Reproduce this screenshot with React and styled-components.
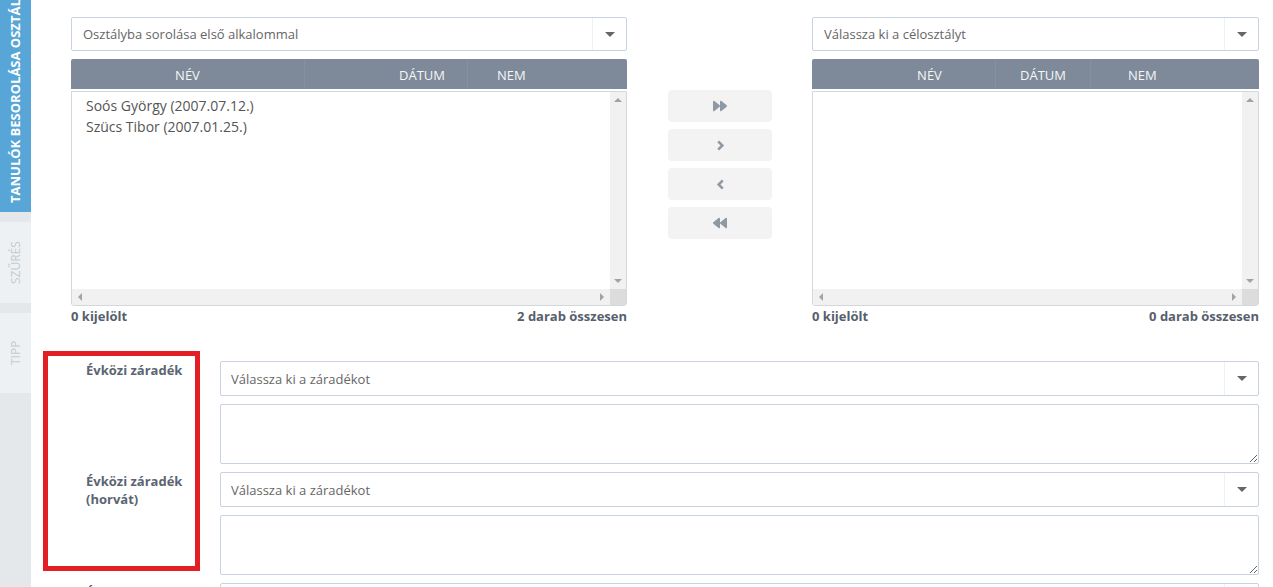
import styled, { createGlobalStyle } from "styled-components";
import { FaForward, FaBackward } from "react-icons/fa";

const Global = createGlobalStyle`
    * { box-sizing: border-box; }
    body {
        margin: 0;
        font-family: "Open Sans", "Liberation Sans", sans-serif;
        background: #fff;
        color: #555;
    }
`

const Page = styled.div`
    display: flex;
    height: 100vh;
    overflow: hidden;
`
const Sidebar = styled.aside`
    width: 31px;
    flex-shrink: 0;
    background: #e5e8eb;
    display: flex;
    flex-direction: column;
    gap: 10px;
`
const Tab = styled.div`
    height: ${p => p.$h}px;
    background: ${p => p.$active ? "#58a5d7" : "#eef1f3"};
    display: flex;
    justify-content: center;
    padding-bottom: ${p => p.$active ? 9 : 0}px;
`
const TabLabel = styled.span`
    writing-mode: vertical-rl;
    transform: rotate(180deg);
    white-space: nowrap;
    overflow: hidden;
    height: 100%;
    text-align: ${p => p.$active ? "start" : "center"};
    font-size: ${p => p.$active ? 13 : 12}px;
    font-weight: ${p => p.$active ? 700 : 400};
    color: ${p => p.$active ? "#fff" : "#c4cad0"};
    line-height: 31px;
`
const Content = styled.main`
    flex: 1;
    padding: 17px 14px 0 40px;
`
const TopRow = styled.div`
    display: flex;
    align-items: flex-start;
`
const Panel = styled.section`
    width: ${p => p.$w}px;
    flex-shrink: 0;
`
const Select = styled.div`
    height: ${p => p.$h || 34}px;
    border: 1px solid #c9d3df;
    border-radius: 2px;
    display: flex;
    align-items: center;
    background: #fff;
`
const SelectText = styled.span`
    flex: 1;
    padding-left: ${p => p.$pad || 11}px;
    font-size: 13px;
    color: #666;
`
const Caret = styled.span`
    width: 34px;
    align-self: stretch;
    border-left: 1px solid #eef0f2;
    display: flex;
    align-items: center;
    justify-content: center;

    &::after {
        content: "";
        border-left: 5px solid transparent;
        border-right: 5px solid transparent;
        border-top: 5px solid #666;
    }
`
const Header = styled.div`
    margin-top: 8px;
    height: 30px;
    background: #7e8a99;
    border-radius: 2px 2px 0 0;
    display: grid;
    grid-template-columns: ${p => p.$cols};
    align-items: center;
    color: #f4f6f8;
    font-size: 13px;
`
const HeadCell = styled.div`
    height: 100%;
    display: flex;
    align-items: center;
    justify-content: ${p => p.$align || "center"};
    padding: 1px ${p => p.$pr || 0}px 0 ${p => p.$pl || 0}px;
    border-right: ${p => p.$sep ? "1px solid #85919f" : "none"};
`
const ListBox = styled.div`
    margin-top: 2px;
    height: 215px;
    border: 1px solid #d3d8dd;
    border-radius: 0 0 3px 3px;
    display: grid;
    grid-template-columns: 1fr 16px;
    grid-template-rows: 1fr 16px;
    overflow: hidden;
`
const Items = styled.div`
    padding: 3px 14px;
    font-size: 14px;
    line-height: 21px;
    color: #555;
`
const VBar = styled.div`
    background: #f1f1f1;
    display: flex;
    flex-direction: column;
    justify-content: space-between;
    align-items: center;
    padding: 6px 0;
`
const HBar = styled.div`
    background: #f1f1f1;
    display: flex;
    justify-content: space-between;
    align-items: center;
    padding: 0 6px;
`
const Corner = styled.div`
    background: #dcdcdc;
`
const Arrow = styled.span`
    width: 0;
    height: 0;
    border: 4px solid transparent;
    ${p => p.$dir === "up" && "border-bottom-color: #a3a3a3; border-top-width: 0;"}
    ${p => p.$dir === "down" && "border-top-color: #a3a3a3; border-bottom-width: 0;"}
    ${p => p.$dir === "left" && "border-right-color: #a3a3a3; border-left-width: 0;"}
    ${p => p.$dir === "right" && "border-left-color: #a3a3a3; border-right-width: 0;"}
`
const Footer = styled.div`
    margin-top: 1px;
    display: flex;
    justify-content: space-between;
    font-size: 13px;
    font-weight: 700;
    line-height: 18px;
    color: #56606d;
`
const Mover = styled.div`
    width: 104px;
    flex-shrink: 0;
    margin: 73px 40px 0 41px;
    display: flex;
    flex-direction: column;
    gap: 7px;
`
const MoveButton = styled.button`
    height: 32px;
    border: none;
    border-radius: 4px;
    background: #f3f3f3;
    color: #8f99a4;
    display: flex;
    align-items: center;
    justify-content: center;
    padding: 0;

    svg {
        width: ${p => p.$size || 11}px;
        height: ${p => p.$size || 11}px;
    }
`
const Form = styled.div`
    position: relative;
    margin-top: 36px;
    display: grid;
    grid-template-columns: 149px 1fr;
    row-gap: 8px;
`
const Label = styled.div`
    padding-left: 15px;
    font-size: 13px;
    font-weight: 700;
    line-height: 18px;
    color: #5b6572;
`
const Field = styled.div`
    display: flex;
    flex-direction: column;
    gap: 8px;
`
const TextArea = styled.textarea`
    height: 60px;
    width: 100%;
    border: 1px solid #c9d3df;
    border-radius: 2px;
    resize: vertical;
    font-family: inherit;
    display: block;
`
const Highlight = styled.div`
    position: absolute;
    left: -28px;
    top: -10px;
    width: 157px;
    height: 220px;
    border: 5px solid #e31e24;
    pointer-events: none;
`

const Chevron = ({ left }) => (
    <svg viewBox="0 0 10 12" fill="none">
        <polyline
            points={left ? "7.5,1.5 3,6 7.5,10.5" : "2.5,1.5 7,6 2.5,10.5"}
            stroke="currentColor"
            strokeWidth="2.8"
        />
    </svg>
)

const Table = ({ width, placeholder, cols, heads, items, selected, total }) => (
    <Panel $w={width}>
        <Select>
            <SelectText>{placeholder}</SelectText>
            <Caret />
        </Select>
        <Header $cols={cols}>
            {heads.map((h, i) => (
                <HeadCell key={i} $sep={i < heads.length - 1} $align={h.align} $pl={h.pl} $pr={h.pr}>{h.text}</HeadCell>
            ))}
        </Header>
        <ListBox>
            <Items>
                {items.map((it, i) => <div key={i}>{it}</div>)}
            </Items>
            <VBar><Arrow $dir="up" /><Arrow $dir="down" /></VBar>
            <HBar><Arrow $dir="left" /><Arrow $dir="right" /></HBar>
            <Corner />
        </ListBox>
        <Footer>
            <span>{selected} kijelölt</span>
            <span>{total} darab összesen</span>
        </Footer>
    </Panel>
)

const ClauseRow = ({ label }) => (
    <>
        <Label>{label}</Label>
        <Field>
            <Select $h={35}>
                <SelectText $pad={10}>Válassza ki a záradékot</SelectText>
                <Caret />
            </Select>
            <TextArea />
        </Field>
    </>
)

const App = () => {
    return (
        <Page>
            <Global />
            <Sidebar>
                <Tab $h={212} $active><TabLabel $active>TANULÓK BESOROLÁSA OSZTÁLYBA</TabLabel></Tab>
                <Tab $h={81}><TabLabel>SZŰRÉS</TabLabel></Tab>
                <Tab $h={80}><TabLabel>TIPP</TabLabel></Tab>
            </Sidebar>
            <Content>
                <TopRow>
                    <Table
                        width={556}
                        placeholder="Osztályba sorolása első alkalommal"
                        cols="234px 163px 1fr"
                        heads={[
                            { text: "NÉV" },
                            { text: "DÁTUM", align: "flex-end", pr: 22 },
                            { text: "NEM", align: "flex-start", pl: 29 },
                        ]}
                        items={["Soós György (2007.07.12.)", "Szücs Tibor (2007.01.25.)"]}
                        selected={0}
                        total={2}
                    />
                    <Mover>
                        <MoveButton $size={14}><FaForward /></MoveButton>
                        <MoveButton $size={11}><Chevron /></MoveButton>
                        <MoveButton $size={11}><Chevron left /></MoveButton>
                        <MoveButton $size={14}><FaBackward /></MoveButton>
                    </Mover>
                    <Table
                        width={447}
                        placeholder="Válassza ki a célosztályt"
                        cols="184px 95px 1fr"
                        heads={[
                            { text: "NÉV", pl: 52 },
                            { text: "DÁTUM" },
                            { text: "NEM", align: "flex-start", pl: 37 },
                        ]}
                        items={[]}
                        selected={0}
                        total={0}
                    />
                </TopRow>
                <Form>
                    <Highlight />
                    <ClauseRow label="Évközi záradék" />
                    <ClauseRow label={<>Évközi záradék<br />(horvát)</>} />
                    <ClauseRow label="Év végi záradék" />
                </Form>
            </Content>
        </Page>
    )
}

export default App;
